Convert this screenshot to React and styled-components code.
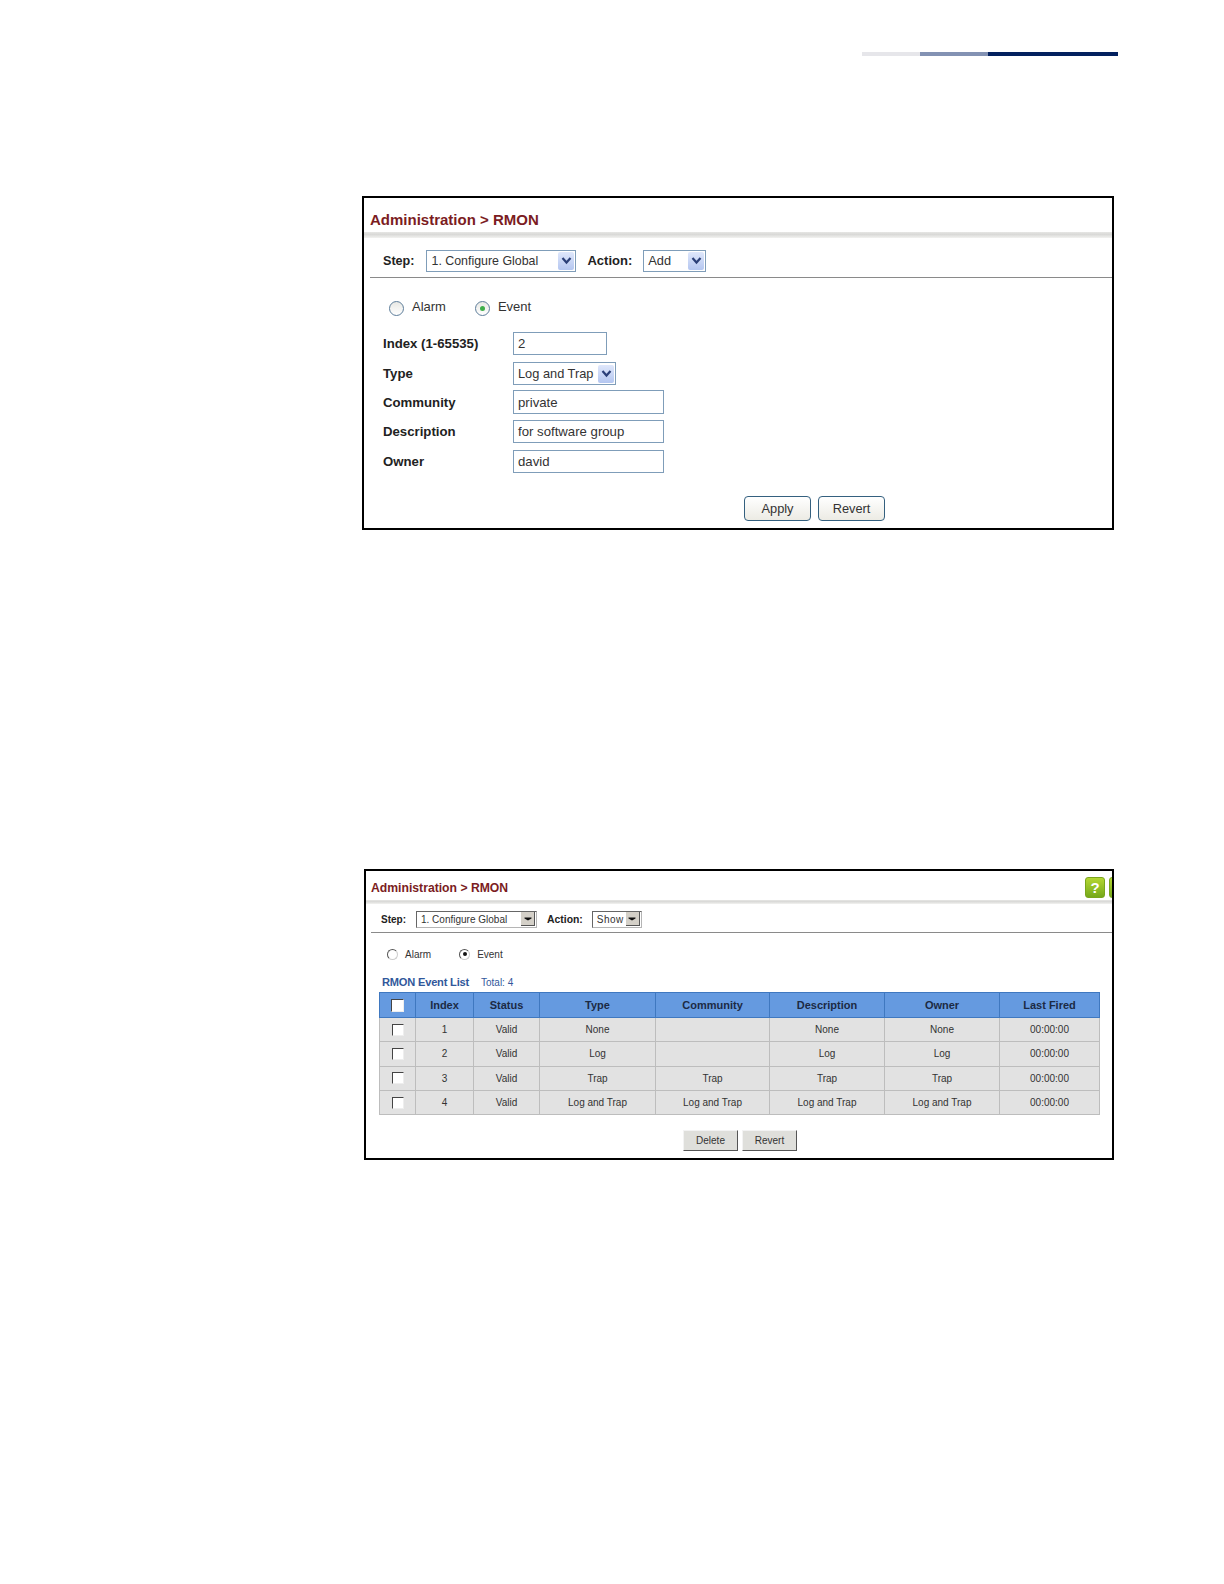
import React from 'react';
import styled, { createGlobalStyle } from 'styled-components';

const GlobalStyle = createGlobalStyle`
  html, body {
    margin: 0;
    padding: 0;
    background: #fff;
  }
  body {
    font-family: "Liberation Sans", Arial, sans-serif;
    color: #222;
  }
`;

const Page = styled.div`
  width: 1224px;
  height: 1584px;
  box-sizing: border-box;
  padding-top: 52px;
  overflow: hidden;
`;

const HeaderRule = styled.div`
  display: flex;
  height: 4px;
  margin-left: 862px;
  width: 256px;
  margin-bottom: 140px;
`;

const RuleSegment = styled.div`
  width: ${(p) => p.$w}px;
  background: ${(p) => p.$color};
`;

const Shot = styled.div`
  box-sizing: border-box;
  width: ${(p) => p.$w}px;
  height: ${(p) => p.$h}px;
  margin-left: ${(p) => p.$left}px;
  margin-bottom: ${(p) => p.$bottom || 0}px;
  border: 2px solid #000;
  background: #fff;
  overflow: hidden;
`;

const TitleBar = styled.div`
  display: flex;
  align-items: center;
  justify-content: space-between;
  box-sizing: border-box;
  height: ${(p) => p.$h}px;
  padding: ${(p) => p.$top}px 0 ${(p) => p.$band}px ${(p) => p.$pad}px;
  background: linear-gradient(#e6e6e4, #d9d9d7 40%, #f2f2f0) bottom / 100% ${(p) => p.$band}px no-repeat;
`;

const Title = styled.div`
  color: #7b1c22;
  font-weight: bold;
  font-size: ${(p) => p.$size}px;
  line-height: 20px;
`;

const HelpButtons = styled.div`
  display: flex;
  gap: 4px;
  margin-top: -2px;
  margin-right: -17px;
`;

const HelpIcon = styled.div`
  box-sizing: border-box;
  flex: none;
  width: 20px;
  height: 21px;
  border-radius: 3px;
  border: 1px solid #7aa51c;
  background: linear-gradient(#b4d733, #75a81a);
  color: #fff;
  font-size: 15px;
  font-weight: bold;
  line-height: 19px;
  text-align: center;
`;

const Toolbar = styled.div`
  display: flex;
  align-items: center;
  box-sizing: border-box;
  height: ${(p) => p.$h}px;
  margin-left: ${(p) => p.$left}px;
  padding: ${(p) => p.$top}px 0 0 ${(p) => p.$pad}px;
  border-bottom: 1px solid #8a8a8a;
`;

const BarLabel = styled.span`
  font-size: ${(p) => p.$size}px;
  font-weight: bold;
  color: #222;
  margin-left: ${(p) => p.$ml || 0}px;
  margin-right: ${(p) => p.$mr || 0}px;
`;

const SoftSelect = styled.div`
  display: flex;
  align-items: center;
  justify-content: space-between;
  box-sizing: border-box;
  width: ${(p) => p.$w}px;
  height: ${(p) => p.$h || 22}px;
  padding: 0 1px 0 4px;
  border: 1px solid #7f9db9;
  font-size: ${(p) => p.$size || 12.4}px;
  white-space: nowrap;
  color: #333;
  background: #fff;
`;

const SoftArrow = styled.div`
  display: flex;
  align-items: center;
  justify-content: center;
  width: 16px;
  height: 18px;
  background: linear-gradient(#dfe7fb, #b4c6f0);
  border-radius: 2px;
`;

const FlatSelect = styled.div`
  display: flex;
  align-items: center;
  justify-content: space-between;
  box-sizing: border-box;
  width: ${(p) => p.$w}px;
  height: 17px;
  padding: 0 1px 0 4px;
  border: 1px solid #b5b5b5;
  border-top-color: #666;
  border-left-color: #666;
  font-size: 10px;
  letter-spacing: ${(p) => p.$track || 0}px;
  white-space: nowrap;
  color: #333;
`;

const FlatArrow = styled.div`
  display: flex;
  align-items: center;
  justify-content: center;
  width: 14px;
  height: 14px;
  background: #d4d0c8;
  border-right: 1px solid #555;
  border-bottom: 1px solid #555;
  box-sizing: border-box;
`;

const Chevron = () => (
  <svg width="11" height="9" viewBox="0 0 11 9">
    <path d="M1.5 2 L5.5 6.5 L9.5 2" fill="none" stroke="#2b3f78" strokeWidth="2.2" />
  </svg>
);

const FlatChevron = () => (
  <svg width="8" height="4" viewBox="0 0 8 4">
    <path d="M0.5 0.5 H7.5 V1.5 L4 3.5 L0.5 1.5 Z" fill="#111" />
  </svg>
);

const RadioRow = styled.div`
  display: flex;
  align-items: center;
  padding-left: ${(p) => p.$pad}px;
  margin-top: ${(p) => p.$top}px;
  height: 20px;
`;

const RadioLabel = styled.span`
  font-size: ${(p) => p.$size}px;
  color: #333;
  margin-left: ${(p) => p.$ml}px;
  margin-right: ${(p) => p.$mr || 0}px;
  position: relative;
  top: ${(p) => p.$up || 0}px;
`;

const SoftRadio = styled.div`
  box-sizing: border-box;
  flex: none;
  display: flex;
  align-items: center;
  justify-content: center;
  width: 15px;
  height: 15px;
  border-radius: 50%;
  border: 1.5px solid #5d7d9a;
  background: linear-gradient(#e8e8e4, #fff);

  &::after {
    content: '';
    display: ${(p) => (p.$on ? 'block' : 'none')};
    width: 5px;
    height: 5px;
    border-radius: 50%;
    background: #3fae4a;
  }
`;

const FlatRadio = styled.div`
  box-sizing: border-box;
  flex: none;
  display: flex;
  align-items: center;
  justify-content: center;
  width: 11px;
  height: 11px;
  border-radius: 50%;
  border: 1px solid #ccc;
  border-top-color: #555;
  border-left-color: #555;

  &::after {
    content: '';
    display: ${(p) => (p.$on ? 'block' : 'none')};
    width: 4px;
    height: 4px;
    border-radius: 50%;
    background: #111;
  }
`;

const Form = styled.div`
  display: flex;
  flex-direction: column;
  margin: 14px 0 0 19px;
`;

const FieldRow = styled.div`
  display: flex;
  align-items: center;
  height: ${(p) => p.$h}px;
  margin-bottom: ${(p) => p.$gap}px;
`;

const FieldLabel = styled.div`
  width: 130px;
  font-size: 13.2px;
  font-weight: bold;
  color: #222;
`;

const TextBox = styled.div`
  box-sizing: border-box;
  width: ${(p) => p.$w}px;
  height: 100%;
  padding-left: 4px;
  border: 1px solid #7f9db9;
  font-size: 13.2px;
  color: #333;
  display: flex;
  align-items: center;
`;

const SoftActions = styled.div`
  display: flex;
  gap: 7px;
  margin: 23px 0 0 380px;
`;

const SoftButton = styled.div`
  box-sizing: border-box;
  width: 67px;
  height: 25px;
  border: 1.5px solid #34607f;
  border-radius: 4px;
  background: linear-gradient(#fff, #ecebe4);
  font-size: 12.8px;
  color: #333;
  text-align: center;
  line-height: 23px;
`;

const ListHeading = styled.div`
  display: flex;
  align-items: baseline;
  padding-left: 16px;
  margin-top: 9px;
  height: 18px;
  line-height: 18px;
`;

const ListTitle = styled.span`
  font-size: 11.1px;
  font-weight: bold;
  color: #31589b;
  letter-spacing: -0.2px;
`;

const ListTotal = styled.span`
  font-size: 10px;
  color: #31589b;
  margin-left: 12px;
`;

const Table = styled.table`
  border-collapse: collapse;
  table-layout: fixed;
  width: 720px;
  margin: 1px 0 0 13px;
  font-size: 10px;
  color: #333;
`;

const HeadCell = styled.th`
  height: 24px;
  padding: 0;
  background: #659ae0;
  border: 1px solid #3f78c0;
  font-size: 11px;
  font-weight: bold;
  color: #1c2a44;
  text-align: center;
`;

const Cell = styled.td`
  height: 23.3px;
  padding: 0;
  background: #e2e2e2;
  border: 1px solid #bdbdbd;
  text-align: center;
`;

const Check = styled.div`
  box-sizing: border-box;
  width: ${(p) => p.$size}px;
  height: ${(p) => p.$size}px;
  margin: 0 auto;
  background: #fff;
  border: 1px solid #eee;
  border-top-color: #444;
  border-left-color: #444;
`;

const FlatActions = styled.div`
  display: flex;
  gap: 4px;
  margin: 15px 0 0 317px;
`;

const FlatButton = styled.div`
  box-sizing: border-box;
  width: 55px;
  height: 21px;
  background: #dfdfdb;
  border: 1px solid #f3f3f3;
  border-right: 1px solid #555;
  border-bottom: 1px solid #555;
  font-size: 10px;
  color: #333;
  text-align: center;
  line-height: 19px;
`;

const columns = [36, 58, 66, 116, 114, 115, 115, 100];
const headings = ['Index', 'Status', 'Type', 'Community', 'Description', 'Owner', 'Last Fired'];
const events = [
  ['1', 'Valid', 'None', '', 'None', 'None', '00:00:00'],
  ['2', 'Valid', 'Log', '', 'Log', 'Log', '00:00:00'],
  ['3', 'Valid', 'Trap', 'Trap', 'Trap', 'Trap', '00:00:00'],
  ['4', 'Valid', 'Log and Trap', 'Log and Trap', 'Log and Trap', 'Log and Trap', '00:00:00'],
];

function ConfigureShot() {
  return (
    <Shot $w={752} $h={334} $left={362} $bottom={339}>
      <TitleBar $h={40} $top={10} $pad={6} $band={6}>
        <Title $size={15}>Administration &gt; RMON</Title>
      </TitleBar>
      <Toolbar $h={40} $top={6} $left={6} $pad={13}>
        <BarLabel $size={12.6} $mr={12}>Step:</BarLabel>
        <SoftSelect $w={150}>
          1. Configure Global
          <SoftArrow><Chevron /></SoftArrow>
        </SoftSelect>
        <BarLabel $size={13} $ml={11} $mr={11}>Action:</BarLabel>
        <SoftSelect $w={63} $size={12.8}>
          Add
          <SoftArrow><Chevron /></SoftArrow>
        </SoftSelect>
      </Toolbar>
      <RadioRow $pad={25} $top={20}>
        <SoftRadio />
        <RadioLabel $size={13} $ml={8} $mr={29} $up={-2}>Alarm</RadioLabel>
        <SoftRadio $on />
        <RadioLabel $size={13} $ml={8} $up={-2}>Event</RadioLabel>
      </RadioRow>
      <Form>
        <FieldRow $h={23} $gap={7}>
          <FieldLabel>Index (1-65535)</FieldLabel>
          <TextBox $w={94}>2</TextBox>
        </FieldRow>
        <FieldRow $h={23} $gap={5}>
          <FieldLabel>Type</FieldLabel>
          <SoftSelect $w={103} $h={23} $size={12.8}>
            Log and Trap
            <SoftArrow><Chevron /></SoftArrow>
          </SoftSelect>
        </FieldRow>
        <FieldRow $h={24} $gap={6}>
          <FieldLabel>Community</FieldLabel>
          <TextBox $w={151}>private</TextBox>
        </FieldRow>
        <FieldRow $h={23} $gap={7}>
          <FieldLabel>Description</FieldLabel>
          <TextBox $w={151}>for software group</TextBox>
        </FieldRow>
        <FieldRow $h={23} $gap={0}>
          <FieldLabel>Owner</FieldLabel>
          <TextBox $w={151}>david</TextBox>
        </FieldRow>
      </Form>
      <SoftActions>
        <SoftButton>Apply</SoftButton>
        <SoftButton>Revert</SoftButton>
      </SoftActions>
    </Shot>
  );
}

function ShowShot() {
  return (
    <Shot $w={750} $h={291} $left={364}>
      <TitleBar $h={33} $top={5} $pad={5} $band={4}>
        <Title $size={12.2}>Administration &gt; RMON</Title>
        <HelpButtons>
          <HelpIcon>?</HelpIcon>
          <HelpIcon />
        </HelpButtons>
      </TitleBar>
      <Toolbar $h={29} $top={2} $left={5} $pad={10}>
        <BarLabel $size={10} $mr={10}>Step:</BarLabel>
        <FlatSelect $w={121}>
          1. Configure Global
          <FlatArrow><FlatChevron /></FlatArrow>
        </FlatSelect>
        <BarLabel $size={10.4} $ml={10} $mr={9}>Action:</BarLabel>
        <FlatSelect $w={50} $track={0.5}>
          Show
          <FlatArrow><FlatChevron /></FlatArrow>
        </FlatSelect>
      </Toolbar>
      <RadioRow $pad={21} $top={11}>
        <FlatRadio />
        <RadioLabel $size={10} $ml={7} $mr={28}>Alarm</RadioLabel>
        <FlatRadio $on />
        <RadioLabel $size={10} $ml={7}>Event</RadioLabel>
      </RadioRow>
      <ListHeading>
        <ListTitle>RMON Event List</ListTitle>
        <ListTotal>Total: 4</ListTotal>
      </ListHeading>
      <Table>
        <colgroup>
          {columns.map((w, i) => (
            <col key={i} width={w} />
          ))}
        </colgroup>
        <thead>
          <tr>
            <HeadCell><Check $size={13} /></HeadCell>
            {headings.map((h) => (
              <HeadCell key={h}>{h}</HeadCell>
            ))}
          </tr>
        </thead>
        <tbody>
          {events.map((row) => (
            <tr key={row[0]}>
              <Cell><Check $size={12} /></Cell>
              {row.map((v, i) => (
                <Cell key={i}>{v}</Cell>
              ))}
            </tr>
          ))}
        </tbody>
      </Table>
      <FlatActions>
        <FlatButton>Delete</FlatButton>
        <FlatButton>Revert</FlatButton>
      </FlatActions>
    </Shot>
  );
}

export default function App() {
  return (
    <>
      <GlobalStyle />
      <Page>
        <HeaderRule>
          <RuleSegment $w={58} $color="#e6e6ea" />
          <RuleSegment $w={68} $color="#8392b3" />
          <RuleSegment $w={130} $color="#03215f" />
        </HeaderRule>
        <ConfigureShot />
        <ShowShot />
      </Page>
    </>
  );
}
